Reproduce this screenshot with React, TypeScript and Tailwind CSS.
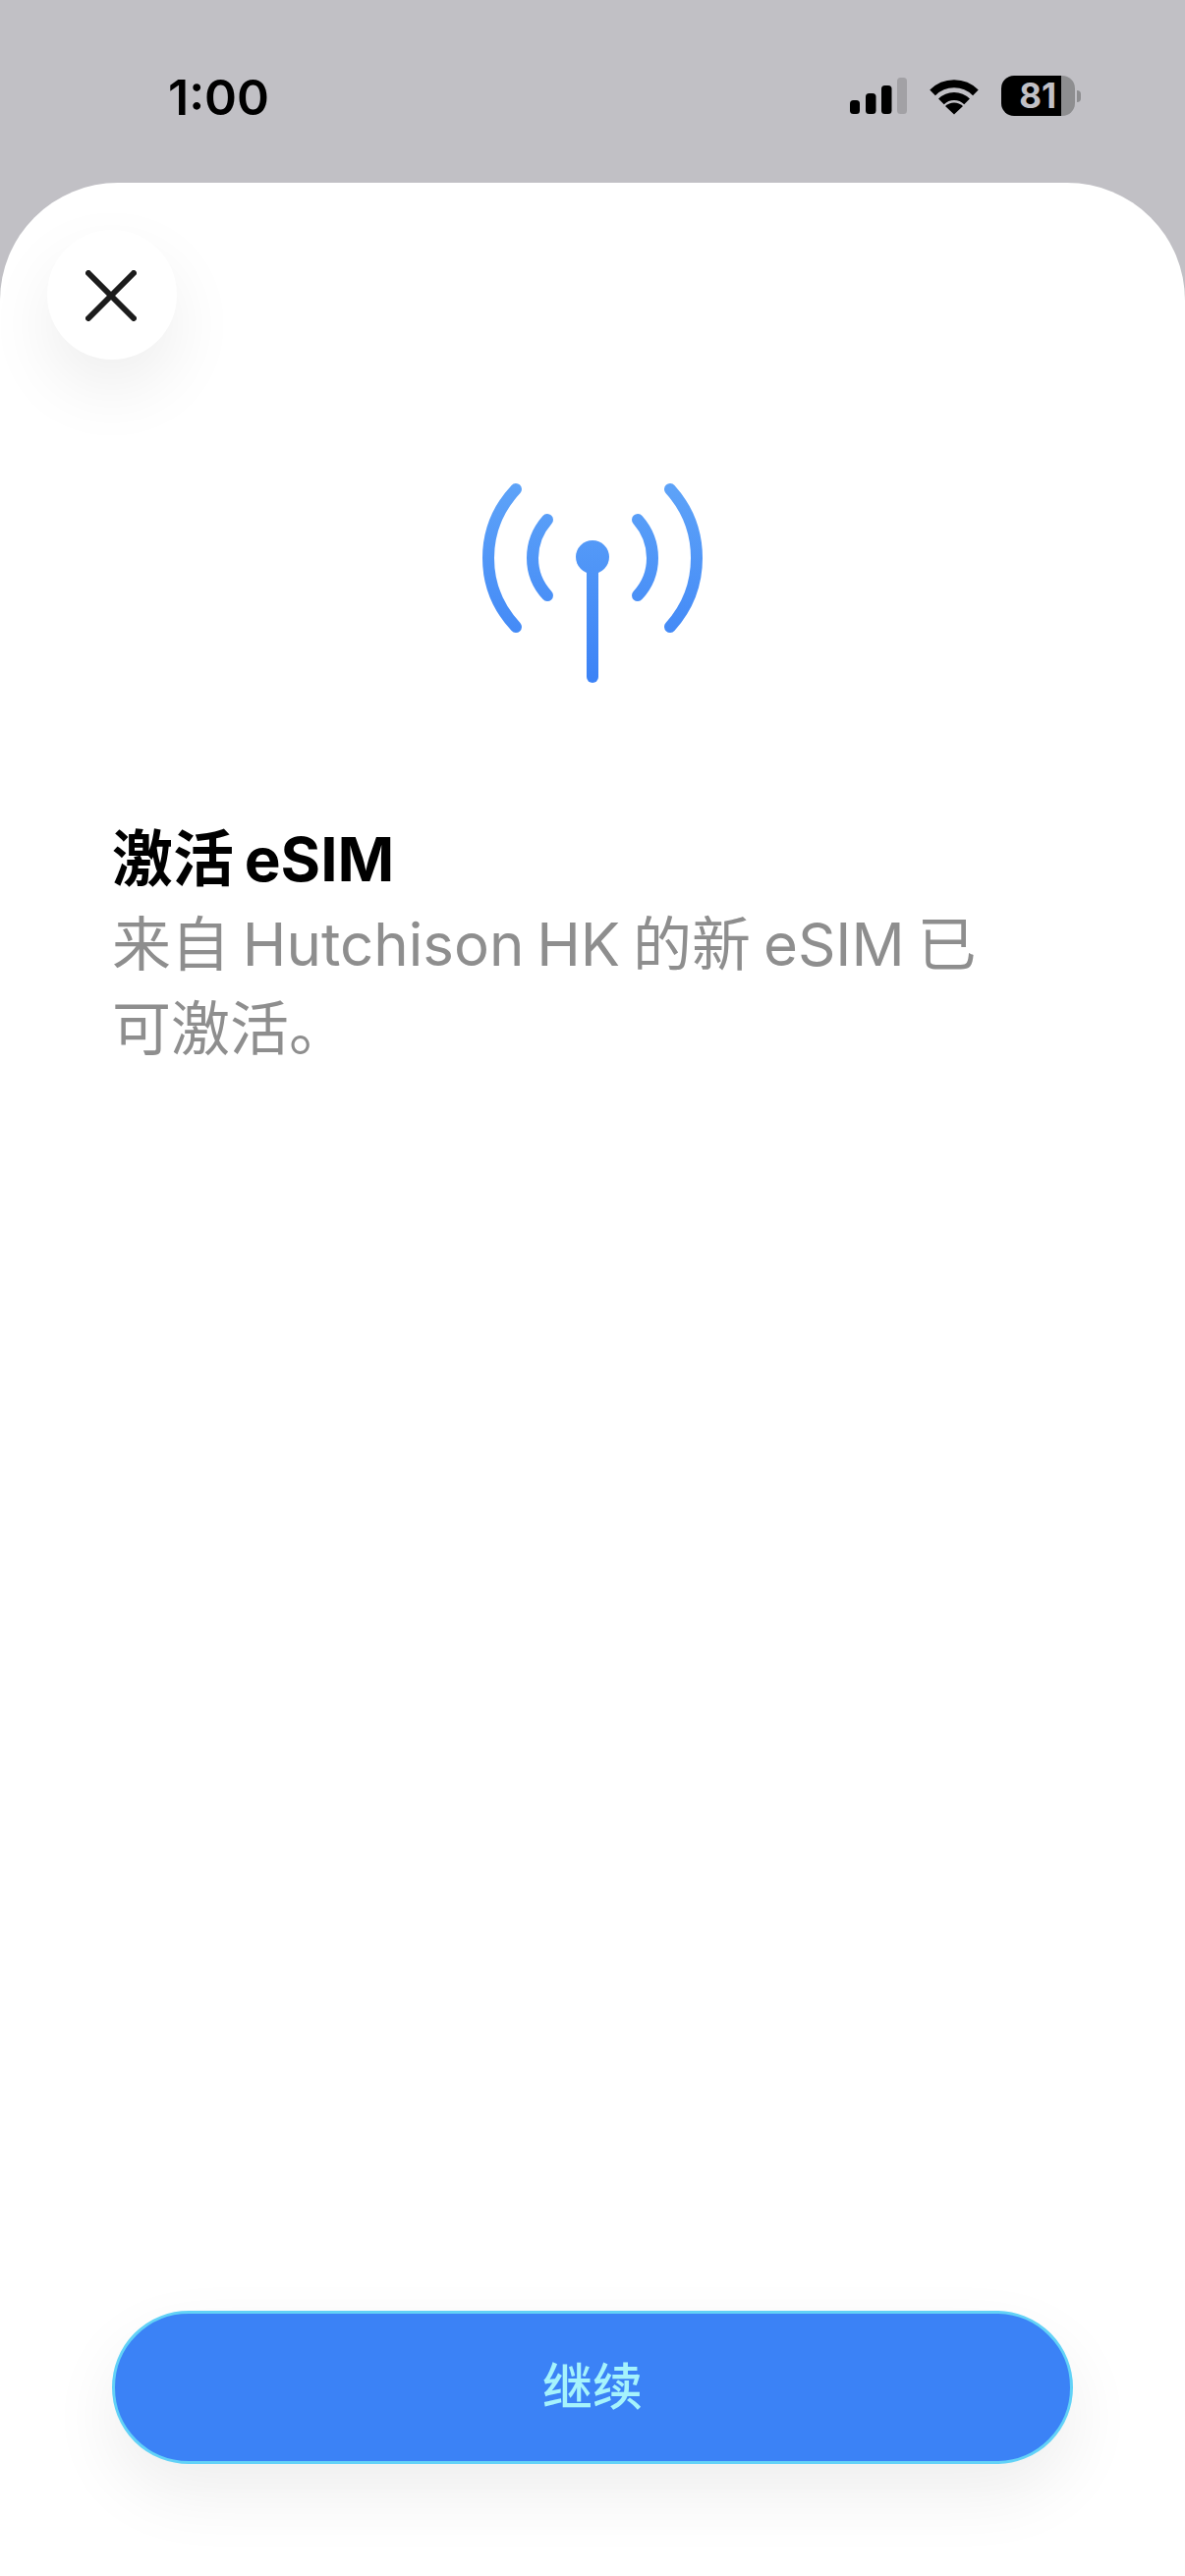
import React from 'react';

const cjk = 'font-["Inter","Noto_Sans_CJK_SC",sans-serif]';

function SignalIcon() {
  return (
    <svg width="58" height="37" viewBox="0 0 58 37" className="block">
      <rect x="0" y="23" width="10" height="14" rx="3.5" fill="#000" />
      <rect x="16" y="16" width="10.5" height="21" rx="3.5" fill="#000" />
      <rect x="32" y="8" width="10.5" height="29" rx="3.5" fill="#000" />
      <rect x="48" y="0" width="10" height="37" rx="3.5" fill="#a2a1a5" />
    </svg>
  );
}

function WifiIcon() {
  return (
    <svg width="52" height="38" viewBox="0 0 52 38" className="block">
      <path d="M4.1 15.4 A31 31 0 0 1 47.9 15.4" fill="none" stroke="#000" strokeWidth="8" />
      <path d="M12.9 24.4 A18.5 18.5 0 0 1 39.1 24.4" fill="none" stroke="#000" strokeWidth="8" />
      <path d="M26 37.5 L17 29 A13 13 0 0 1 35 29 Z" fill="#000" />
    </svg>
  );
}

function Battery() {
  return (
    <div className="flex items-center gap-[2px]">
      <div className="flex h-[41px] w-[75px] overflow-hidden rounded-[13px]">
        <div className="flex w-[61px] items-center justify-end bg-black pr-[5px] font-['Inter',sans-serif] text-[35px] leading-none font-bold text-[#c1c0c5]">
          81
        </div>
        <div className="flex-1 bg-[#8e8e90]" />
      </div>
      <div className="h-[12px] w-[4px] rounded-r-[4px] bg-[#8e8e90]" />
    </div>
  );
}

function AntennaIcon() {
  return (
    <svg width="226" height="204" viewBox="490 492 226 204" className="block" fill="none">
      <defs>
        <linearGradient id="antenna" gradientUnits="userSpaceOnUse" x1="0" y1="492" x2="0" y2="696">
          <stop offset="0" stopColor="#5ea3f8" />
          <stop offset="1" stopColor="#3b82f6" />
        </linearGradient>
      </defs>
      <g stroke="url(#antenna)" strokeWidth="12" strokeLinecap="round">
        <path d="M525 498 Q497 528 497 568 Q497 608 525 638" />
        <path d="M557 529 Q542 546 542 568 Q542 590 557 606" />
        <path d="M649 529 Q664 546 664 568 Q664 590 649 606" />
        <path d="M682 498 Q709 528 709 568 Q709 608 682 638" />
        <path d="M603 570 L603 689" />
      </g>
      <circle cx="603" cy="567" r="17" fill="url(#antenna)" />
    </svg>
  );
}

export default function App() {
  return (
    <div className="flex h-[2622px] w-[1206px] flex-col overflow-hidden bg-[#c1c0c5]">
      {/* status bar */}
      <div className="flex h-[186px] shrink-0 items-start justify-between pt-[72px] pr-[106px] pl-[171px]">
        <div className="font-['Inter',sans-serif] text-[50px] leading-[54px] font-semibold text-black">1:00</div>
        <div className="flex items-center pt-[5px]">
          <SignalIcon />
          <div className="ml-[22px]"><WifiIcon /></div>
          <div className="ml-[22px]"><Battery /></div>
        </div>
      </div>

      {/* sheet */}
      <div className="flex flex-1 flex-col overflow-hidden rounded-t-[120px] bg-white">
        <div className="px-[48px] pt-[48px]">
          <button className="flex h-[132px] w-[132px] items-center justify-center rounded-full bg-white shadow-[0_30px_70px_rgba(0,0,0,0.07)]">
            <svg width="52" height="52" viewBox="0 0 52 52" fill="none" stroke="#1c1c1c" strokeWidth="6" strokeLinecap="round" className="-translate-x-[1px] translate-y-[1px]">
              <path d="M3 3 L49 49" />
              <path d="M49 3 L3 49" />
            </svg>
          </button>
        </div>

        <div className="mt-[126px] flex justify-center">
          <AntennaIcon />
        </div>

        <div className={`mt-[136px] px-[114px] ${cjk}`}>
          <h1 className="text-[62px] leading-[86px] font-bold text-black [word-spacing:-4px]">激活 eSIM</h1>
          <p className="text-[60px] leading-[86px] text-[#8e8e8e] [word-spacing:-4px]">
            来自 Hutchison HK 的新 eSIM 已<br />可激活。
          </p>
        </div>

        <div className="mt-auto px-[114px] pb-[114px]">
          <button className={`flex h-[156px] w-full items-center justify-center rounded-[78px] border-[3px] border-[#62d2f7] bg-[#3b82f6] text-[51px] font-medium text-[#a5f3fc] shadow-[0_30px_70px_rgba(0,0,0,0.07)] ${cjk}`}>
            继续
          </button>
        </div>
      </div>
    </div>
  );
}
